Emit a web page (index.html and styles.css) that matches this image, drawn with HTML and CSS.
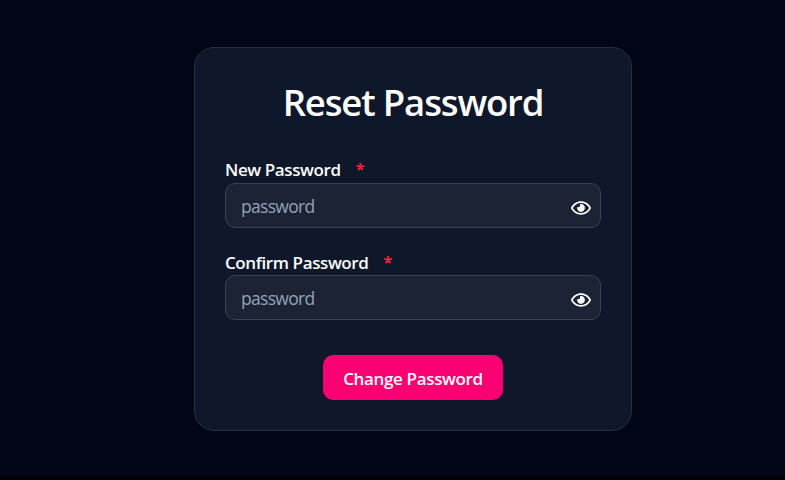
FILE: index.html
```html
<!DOCTYPE html>
<html lang="en">
<head>
<meta charset="utf-8">
<title>Reset Password</title>
<link rel="stylesheet" href="styles.css">
</head>
<body>
<svg width="0" height="0" class="defs" aria-hidden="true">
  <symbol id="eye" viewBox="0 0 576 512"><path d="M288 144a110.94 110.94 0 0 0-31.24 5 55.4 55.4 0 0 1 7.24 27 56 56 0 0 1-56 56 55.4 55.4 0 0 1-27-7.24A111.71 111.71 0 1 0 288 144zm284.52 97.4C518.29 135.59 410.93 64 288 64S57.68 135.64 3.48 241.41a32.35 32.35 0 0 0 0 29.19C57.71 376.41 165.07 448 288 448s230.32-71.64 284.52-177.41a32.35 32.35 0 0 0 0-29.19zM288 400c-98.65 0-189.09-55-237.93-144C98.91 167 189.34 112 288 112s189.09 55 237.93 144C477.1 345 386.66 400 288 400z"/></symbol>
</svg>
<main class="page">
  <form class="card">
    <h1 class="title">Reset Password</h1>
    <div class="field">
      <label class="label" for="new"><span class="name">New Password</span><span class="req">*</span></label>
      <div class="control"><input class="input" id="new" type="password" placeholder="password"><svg class="eye"><use href="#eye"/></svg></div>
    </div>
    <div class="field">
      <label class="label" for="confirm"><span class="name">Confirm Password</span><span class="req">*</span></label>
      <div class="control"><input class="input" id="confirm" type="password" placeholder="password"><svg class="eye"><use href="#eye"/></svg></div>
    </div>
    <button class="submit" type="button">Change Password</button>
  </form>
</main>
</body>
</html>
```
FILE: styles.css
```css
* { box-sizing: border-box; }
body {
  margin: 0;
  background: #000;
  color: #fff;
  font-family: "Open Sans", "Noto Sans", sans-serif;
}
.defs { display: none; }
.page {
  height: 476px;
  padding: 47px 0 0 194px;
  background: #020617;
}
.card {
  width: 438px;
  height: 384px;
  padding: 30px 30px 0;
  display: flex;
  flex-direction: column;
  background: #0f172a;
  border: 1px solid #272f40;
  border-radius: 20px;
}
.title {
  margin: 0 0 31px;
  line-height: 48px;
  font-size: 36.5px;
  font-weight: 600;
  letter-spacing: -1.15px;
  text-align: center;
  white-space: nowrap;
}
.field { margin-bottom: 21px; }
.label {
  display: flex;
  height: 26px;
  line-height: 26px;
  font-size: 17px;
  font-weight: 600;
  letter-spacing: -0.4px;
}
.field + .field .label { line-height: 28px; }
.req {
  margin: -1px 0 0 15px;
  color: #f5243a;
  font-size: 16px;
  font-weight: 700;
}
.control {
  display: flex;
  align-items: center;
  height: 45px;
  padding: 0 9px 0 15px;
  background: #1b2335;
  border: 1px solid #3a4252;
  border-radius: 10px;
}
.input {
  flex: 1;
  min-width: 0;
  padding: 0;
  background: none;
  border: 0;
  outline: 0;
  color: #fff;
  font: 400 17.5px "Open Sans", "Noto Sans", sans-serif;
  letter-spacing: -0.7px;
}
.input::placeholder { color: #94a3b8; opacity: 1; }
.eye {
  width: 20px;
  height: 18px;
  margin-top: 4px;
  fill: #fff;
}
.submit {
  align-self: center;
  width: 180px;
  height: 45px;
  margin-top: 14px;
  padding: 2px 0 0;
  background: #fb0072;
  border: 0;
  border-radius: 10px;
  color: #fff;
  font: 600 17px "Open Sans", "Noto Sans", sans-serif;
  letter-spacing: -0.35px;
}
```
